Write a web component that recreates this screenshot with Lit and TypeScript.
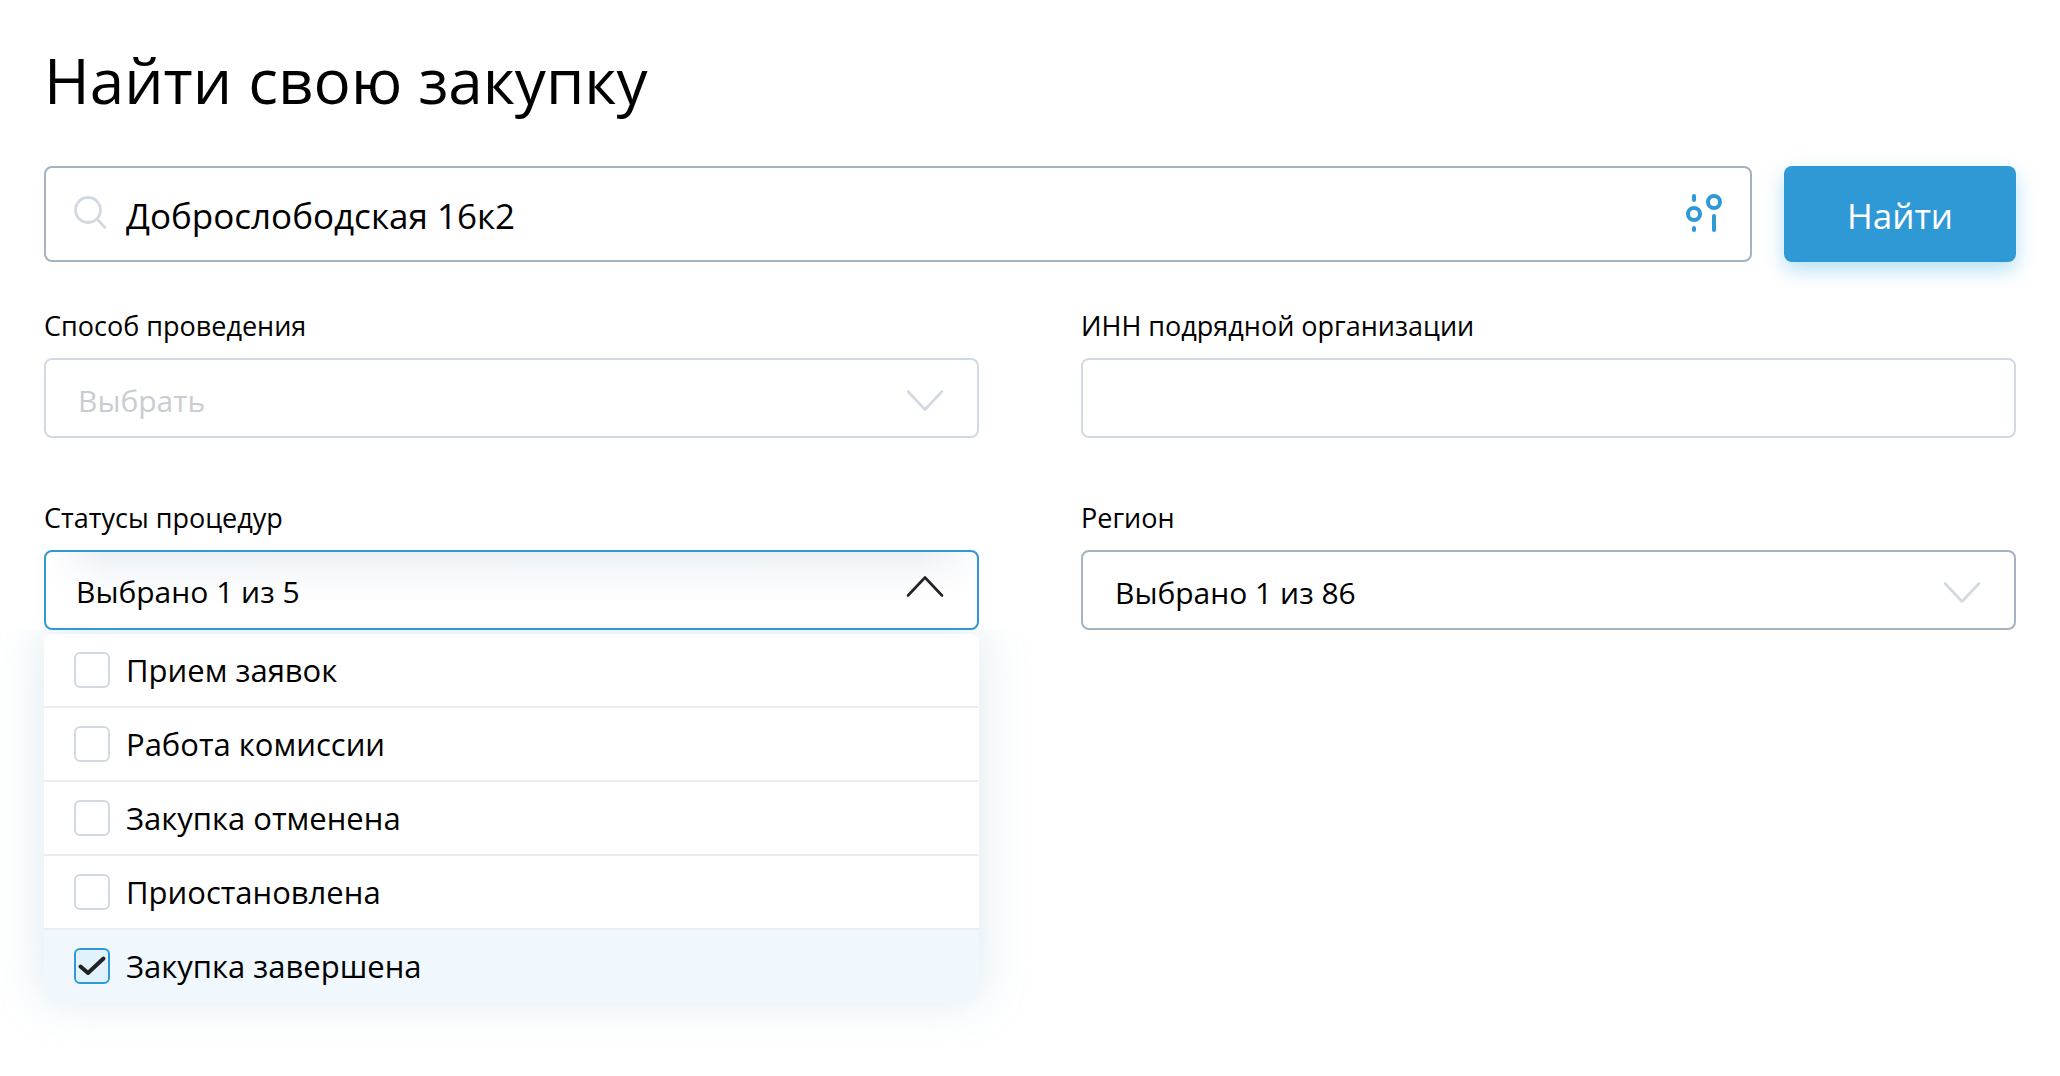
import { LitElement, html, css, svg } from "lit";
import { customElement, property, state } from "lit/decorators.js";
import { classMap } from "lit/directives/class-map.js";

const chevron = (up = false) => html`
  <svg class="chevron" viewBox="0 0 40 32" width="40" height="32" aria-hidden="true">
    ${svg`<path d=${up ? "M3 20.5 20 2.5 37 20.5" : "M3 7.5 20 25.500 37 7.5"} fill="none" stroke="currentColor"
      stroke-width="2.6" stroke-linecap="round" stroke-linejoin="round" />`}
  </svg>`;

interface Status {
  id: string;
  label: string;
  checked: boolean;
}

@customElement("status-picker")
export class StatusPicker extends LitElement {
  @property({ type: Boolean }) open = true;
  @state() private items: Status[] = [
    { id: "accept", label: "Прием заявок", checked: false },
    { id: "review", label: "Работа комиссии", checked: false },
    { id: "cancelled", label: "Закупка отменена", checked: false },
    { id: "paused", label: "Приостановлена", checked: false },
    { id: "done", label: "Закупка завершена", checked: true },
  ];

  static styles = css`
    :host {
      display: flex;
      flex-direction: column;
      gap: 16px;
      color: #000;
      font-size: 31px;
    }
    .label {
      font-size: 27px;
      line-height: 32px;
    }
    .picker {
      position: relative;
    }
    .trigger {
      box-sizing: border-box;
      width: 100%;
      height: 80px;
      display: flex;
      align-items: center;
      justify-content: space-between;
      padding: 2px 32px 0 30px;
      border: 2px solid #a4b3c2;
      border-radius: 8px;
      background: #fff;
      color: #000;
      font: inherit;
      font-size: 30px;
      text-align: left;
      cursor: pointer;
    }
    .trigger.open {
      border-color: #2f99d6;
      background:
        linear-gradient(90deg, #fff, rgba(255, 255, 255, 0) 60px, rgba(255, 255, 255, 0) calc(100% - 60px), rgba(255, 255, 255, 0.8)),
        linear-gradient(#eaf0f5, #f6f8fb 20px, #fdfdfe 40px, #fff 56px);
    }
    .chevron {
      flex: none;
      color: #d2d9e2;
    }
    .trigger.open .chevron {
      color: #222;
    }
    .menu {
      position: absolute;
      top: calc(100% + 4px);
      left: 0;
      right: 0;
      margin: 0;
      padding: 0;
      list-style: none;
      border-radius: 8px;
      background: #fff;
      box-shadow: 0 -4px 48px rgba(120, 165, 195, 0.26);
      clip-path: inset(-4px -70px -60px -70px);
    }
    .row {
      display: flex;
      align-items: center;
      gap: 16px;
      height: 72px;
      padding: 0 30px;
      border-bottom: 2px solid #ebedf2;
      cursor: pointer;
    }
    .item:last-child .row {
      border-bottom: 0;
      border-radius: 0 0 8px 8px;
    }
    .row.checked {
      background: #f0f8fe;
    }
    .check {
      display: grid;
      flex: none;
    }
    .check > * {
      grid-area: 1 / 1;
    }
    .box {
      appearance: none;
      box-sizing: border-box;
      width: 36px;
      height: 36px;
      margin: 0;
      border: 2px solid #d2d9e2;
      border-radius: 6px;
      background: #fff;
      cursor: pointer;
    }
    .box:checked {
      border-color: #2f99d6;
      background: #e1f2fd;
    }
    .tick {
      pointer-events: none;
    }
  `;

  private toggle(index: number) {
    this.items = this.items.map((item, i) => (i === index ? { ...item, checked: !item.checked } : item));
  }

  render() {
    const count = this.items.filter((item) => item.checked).length;
    return html`
      <span class="label" id="caption">Статусы процедур</span>
      <div class="picker">
        <button
          type="button"
          id="trigger"
          class=${classMap({ trigger: true, open: this.open })}
          aria-expanded=${this.open}
          aria-labelledby="caption trigger"
          @click=${() => (this.open = !this.open)}
        >
          <span>Выбрано ${count} из ${this.items.length}</span>
          ${chevron(this.open)}
        </button>
        ${this.open
          ? html`<ul class="menu">
              ${this.items.map(
                (item, i) => html`<li class="item">
                  <label class=${classMap({ row: true, checked: item.checked })} for=${item.id}>
                    <span class="check">
                      <input class="box" type="checkbox" id=${item.id} .checked=${item.checked} @change=${() => this.toggle(i)} />
                      ${item.checked
                        ? html`<svg class="tick" viewBox="0 0 36 36" width="36" height="36" aria-hidden="true">
                            <path d="M6.5 18.5 14 25 29.5 10.5" fill="none" stroke="#222" stroke-width="4" stroke-linecap="round" stroke-linejoin="round" />
                          </svg>`
                        : null}
                    </span>
                    <span>${item.label}</span>
                  </label>
                </li>`
              )}
            </ul>`
          : null}
      </div>
    `;
  }
}

@customElement("app-root")
export class AppRoot extends LitElement {
  static styles = css`
    :host {
      display: block;
      box-sizing: border-box;
      min-height: 100vh;
      padding: 40px 44px;
      background: #fff;
      color: #000;
      font-family: "Open Sans", "Noto Sans", sans-serif;
      font-size: 30px;
    }
    .title {
      margin: 0 0 46px;
      font-size: 62px;
      font-weight: 400;
      line-height: 80px;
    }
    .bar {
      display: flex;
      gap: 32px;
      margin-bottom: 48px;
    }
    .search {
      flex: 1;
      min-width: 0;
      box-sizing: border-box;
      height: 96px;
      display: flex;
      align-items: center;
      gap: 16px;
      padding: 0 26px;
      border: 2px solid #a4b3c2;
      border-radius: 8px;
    }
    .glass {
      flex: none;
    }
    .query {
      flex: 1;
      min-width: 0;
      height: 92px;
      padding: 2px 0 0;
      border: 0;
      outline: 0;
      background: none;
      color: inherit;
      font: inherit;
      font-size: 35px;
    }
    .tune {
      flex: none;
      display: grid;
      padding: 0;
      border: 0;
      background: none;
      cursor: pointer;
    }
    .submit {
      flex: none;
      width: 232px;
      height: 96px;
      padding: 2px 0 0;
      border: 0;
      border-radius: 8px;
      background: #2f99d6;
      box-shadow: 0 8px 20px rgba(47, 170, 220, 0.36);
      color: #fff;
      font: inherit;
      font-size: 35px;
      cursor: pointer;
    }
    .fields {
      display: grid;
      grid-template-columns: 1fr 1fr;
      gap: 64px 102px;
    }
    .field {
      display: flex;
      flex-direction: column;
      gap: 16px;
      min-width: 0;
    }
    .label {
      font-size: 27px;
      line-height: 32px;
    }
    .wrap {
      display: grid;
      align-items: center;
    }
    .wrap > * {
      grid-area: 1 / 1;
    }
    .control {
      appearance: none;
      box-sizing: border-box;
      width: 100%;
      height: 80px;
      padding: 4px 96px 0 32px;
      border: 2px solid #a4b3c2;
      border-radius: 8px;
      background: #fff;
      color: #000;
      font: inherit;
      font-size: 30px;
    }
    .control.empty {
      border-color: #d2d9e2;
      color: #c8cdd3;
    }
    .chevron {
      justify-self: end;
      margin: 4px 34px 0 0;
      color: #d2d9e2;
      pointer-events: none;
    }
  `;

  render() {
    return html`
      <h1 class="title">Найти свою закупку</h1>
      <form @submit=${(e: Event) => e.preventDefault()}>
        <div class="bar">
          <div class="search">
            <svg class="glass" viewBox="0 0 38 36" width="38" height="36" aria-hidden="true">
              <g fill="none" stroke="#d2d9e2" stroke-width="2.8" stroke-linecap="round">
                <circle cx="16" cy="14" r="12.5" />
                <path d="M25 23 33 31.5" />
              </g>
            </svg>
            <input class="query" type="text" aria-label="Поиск закупки" value="Доброслободская 16к2" />
            <button class="tune" type="button" aria-label="Фильтры">
              <svg viewBox="0 0 40 40" width="40" height="40" aria-hidden="true">
                <g fill="none" stroke="#2f99d6" stroke-width="4" stroke-linecap="round">
                  <circle cx="10" cy="20" r="6" />
                  <circle cx="30" cy="8" r="6" />
                  <path d="M10 2v4M10 34v2M30 22v14" />
                </g>
              </svg>
            </button>
          </div>
          <button class="submit" type="submit">Найти</button>
        </div>
        <div class="fields">
          <div class="field">
            <label class="label" for="method">Способ проведения</label>
            <div class="wrap">
              <select class="control empty" id="method">
                <option>Выбрать</option>
              </select>
              ${chevron()}
            </div>
          </div>
          <div class="field">
            <label class="label" for="inn">ИНН подрядной организации</label>
            <input class="control empty" id="inn" type="text" />
          </div>
          <status-picker></status-picker>
          <div class="field">
            <label class="label" for="region">Регион</label>
            <div class="wrap">
              <select class="control" id="region">
                <option>Выбрано 1 из 86</option>
              </select>
              ${chevron()}
            </div>
          </div>
        </div>
      </form>
    `;
  }
}
